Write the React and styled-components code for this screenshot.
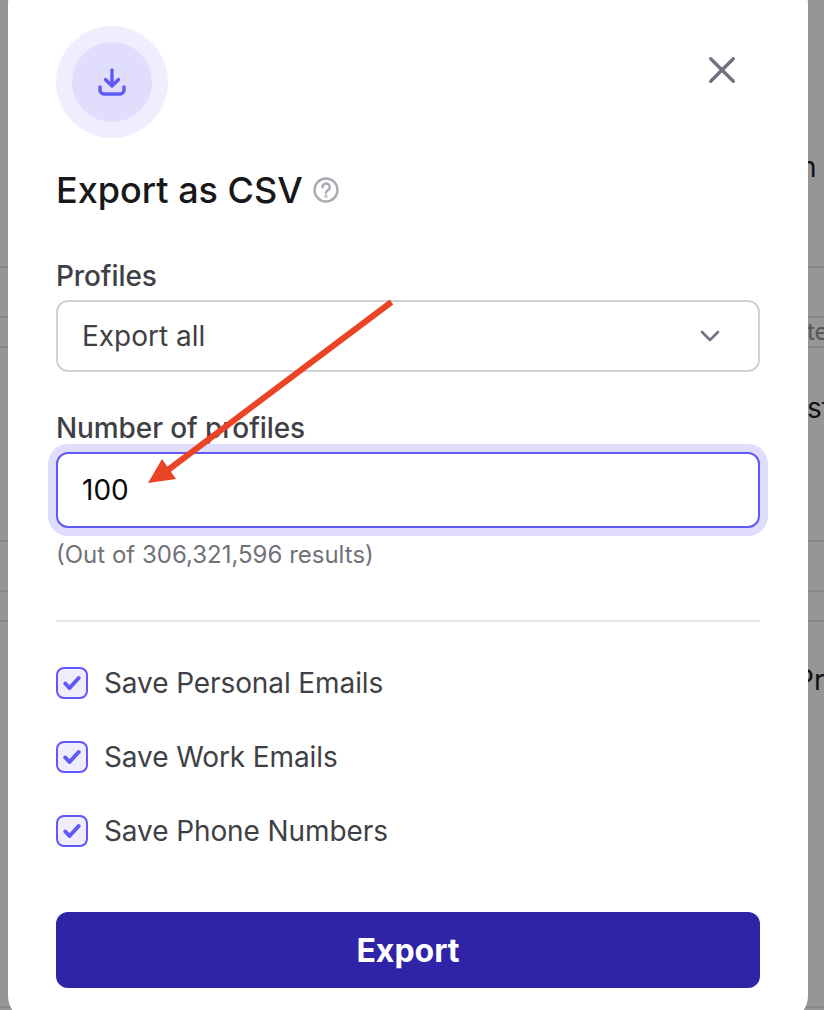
import React from "react";
import styled, { createGlobalStyle } from "styled-components";

const FONT = `Inter, "Liberation Sans", sans-serif`;

const GlobalStyle = createGlobalStyle`
  html, body {
    margin: 0;
    padding: 0;
    background: #969696;
  }
  * {
    box-sizing: border-box;
  }
`;

const Page = styled.div`
  position: relative;
  width: 824px;
  height: 1010px;
  overflow: hidden;
  background: #969696;
  font-family: ${FONT};
`;

const Backdrop = styled.div`
  display: flex;
  flex-direction: column;
  padding-top: 147px;
`;

const BackRule = styled.div`
  flex: none;
  height: 2px;
  background: #888888;
  margin-top: ${(p) => p.$gap || 0}px;
`;

const BackText = styled.div`
  flex: none;
  height: ${(p) => p.$height || 40}px;
  line-height: ${(p) => p.$height || 40}px;
  margin-top: ${(p) => p.$gap || 0}px;
  padding-left: ${(p) => p.$left}px;
  font-size: ${(p) => p.$size || 28}px;
  color: ${(p) => p.$color || "#111114"};
  white-space: nowrap;
`;

const Modal = styled.div`
  position: absolute;
  top: -20px;
  left: 8px;
  width: 800px;
  height: 1040px;
  display: flex;
  flex-direction: column;
  padding: 46px 48px 0;
  background: #fff;
  border-radius: 24px;
`;

const IconHalo = styled.div`
  width: 112px;
  height: 112px;
  display: flex;
  align-items: center;
  justify-content: center;
  border-radius: 50%;
  background: #efedfe;
`;

const IconDisc = styled.div`
  width: 80px;
  height: 80px;
  display: flex;
  align-items: center;
  justify-content: center;
  border-radius: 50%;
  background: #e0defc;
  color: #6059f7;
`;

const CloseButton = styled.button`
  position: absolute;
  top: 72px;
  left: 696px;
  width: 36px;
  height: 36px;
  padding: 0;
  display: flex;
  align-items: center;
  justify-content: center;
  border: 0;
  background: none;
  color: #71717f;
`;

const TitleRow = styled.div`
  display: flex;
  align-items: center;
  gap: 10px;
  margin-top: 30px;
  height: 44px;
`;

const Title = styled.h2`
  margin: 0;
  font-size: 36px;
  font-weight: 500;
  color: #18181b;
`;

const Label = styled.label`
  display: block;
  font-size: 28px;
  line-height: 30px;
  font-weight: 500;
  letter-spacing: -0.1px;
  color: #3f3f46;
`;

const Field = styled.div`
  margin-top: ${(p) => p.$top}px;
`;

const SelectBox = styled.div`
  height: 72px;
  margin-top: 9px;
  padding: 0 38px 0 24px;
  display: flex;
  align-items: center;
  justify-content: space-between;
  border: 2px solid #d1d1d6;
  border-radius: 12px;
  font-size: 28px;
  color: #3f3f46;
`;

const NumberBox = styled.input`
  display: block;
  width: 100%;
  height: 76px;
  margin-top: 9px;
  padding: 0 24px;
  border: 2px solid #6059f7;
  border-radius: 12px;
  box-shadow: 0 0 0 8px #e0defc;
  outline: none;
  font-family: ${FONT};
  font-size: 28px;
  color: #09090b;
`;

const Hint = styled.div`
  margin-top: 13px;
  font-size: 24px;
  line-height: 28px;
  color: #71717a;
`;

const Divider = styled.hr`
  margin: 51px 0 0;
  border: 0;
  height: 2px;
  flex: none;
  background: #e4e4e7;
`;

const CheckList = styled.div`
  display: flex;
  flex-direction: column;
  gap: 42px;
  margin-top: 45px;
`;

const CheckRow = styled.div`
  display: flex;
  align-items: center;
  gap: 16px;
  height: 32px;
  font-size: 28px;
  letter-spacing: -0.1px;
  color: #3f3f46;
`;

const CheckBox = styled.span`
  width: 32px;
  height: 32px;
  display: flex;
  align-items: center;
  justify-content: center;
  border: 2px solid #6059f7;
  border-radius: 8px;
  background: #efedfe;
  color: #6059f7;
`;

const ExportButton = styled.button`
  flex: none;
  height: 76px;
  margin-top: 65px;
  border: 0;
  border-radius: 12px;
  background: #2f23a8;
  color: #fff;
  font-family: ${FONT};
  font-size: 32px;
  font-weight: 700;
`;

const ArrowLayer = styled.svg`
  position: absolute;
  top: 0;
  left: 0;
  pointer-events: none;
`;

const CHECKS = ["Save Personal Emails", "Save Work Emails", "Save Phone Numbers"];

function DownloadIcon() {
  return (
    <svg width="32" height="32" viewBox="0 0 32 32" fill="none" stroke="currentColor" strokeWidth="3.4" strokeLinecap="round" strokeLinejoin="round">
      <path d="M16 4v16M9.5 13.5l6.5 6.5 6.5-6.5" />
      <path d="M4 21v3a4 4 0 0 0 4 4h16a4 4 0 0 0 4-4v-3" />
    </svg>
  );
}

function App() {
  return (
    <Page>
      <GlobalStyle />
      <Backdrop>
        <BackText $left={800}>n</BackText>
        <BackRule $gap={79} />
        <BackRule $gap={48} />
        <BackText $left={807} $size={24} $height={28} $color="#55555c">te</BackText>
        <BackRule />
        <BackText $left={807} $gap={40}>st</BackText>
        <BackRule $gap={112} />
        <BackRule $gap={48} />
        <BackRule $gap={28} />
        <BackText $left={796} $gap={38}>Pr</BackText>
        <BackRule $gap={306} />
      </Backdrop>
      <Modal>
        <IconHalo>
          <IconDisc>
            <DownloadIcon />
          </IconDisc>
        </IconHalo>
        <CloseButton aria-label="Close">
          <svg width="30" height="30" viewBox="0 0 30 30" fill="none" stroke="currentColor" strokeWidth="3.4" strokeLinecap="round">
            <path d="M3.7 3.7l22.6 22.6M26.3 3.7L3.7 26.3" />
          </svg>
        </CloseButton>
        <TitleRow>
          <Title>Export as CSV</Title>
          <svg width="26" height="26" viewBox="0 0 26 26" fill="none" stroke="#a9a9b4" strokeWidth="2.4" strokeLinecap="round">
            <circle cx="13" cy="13" r="11.5" />
            <path d="M9.5 10.2a3.6 3.6 0 1 1 5.4 3.1c-1.2.7-1.9 1.3-1.9 2.4" />
            <circle cx="13" cy="19.2" r=".5" />
          </svg>
        </TitleRow>
        <Field $top={49}>
          <Label>Profiles</Label>
          <SelectBox>
            Export all
            <svg width="20" height="12" viewBox="0 0 20 12" fill="none" stroke="#71717f" strokeWidth="2.6" strokeLinecap="round" strokeLinejoin="round">
              <path d="M2 2l8 8 8-8" />
            </svg>
          </SelectBox>
        </Field>
        <Field $top={41}>
          <Label>Number of profiles</Label>
          <NumberBox defaultValue="100" />
          <Hint>(Out of 306,321,596 results)</Hint>
        </Field>
        <Divider />
        <CheckList>
          {CHECKS.map((label) => (
            <CheckRow key={label}>
              <CheckBox>
                <svg width="20" height="18" viewBox="0 0 20 18" fill="none" stroke="currentColor" strokeWidth="4" strokeLinecap="round" strokeLinejoin="round">
                  <path d="M3.3 9.5L7.5 14l9.2-10" />
                </svg>
              </CheckBox>
              {label}
            </CheckRow>
          ))}
        </CheckList>
        <ExportButton>Export</ExportButton>
      </Modal>
      <ArrowLayer width="824" height="1010" viewBox="0 0 824 1010">
        <path d="M391.5 302L168 470" stroke="#ea4325" strokeWidth="6" fill="none" />
        <path d="M148 483l14-24 14 20z" fill="#ea4325" />
      </ArrowLayer>
    </Page>
  );
}

export default App;
